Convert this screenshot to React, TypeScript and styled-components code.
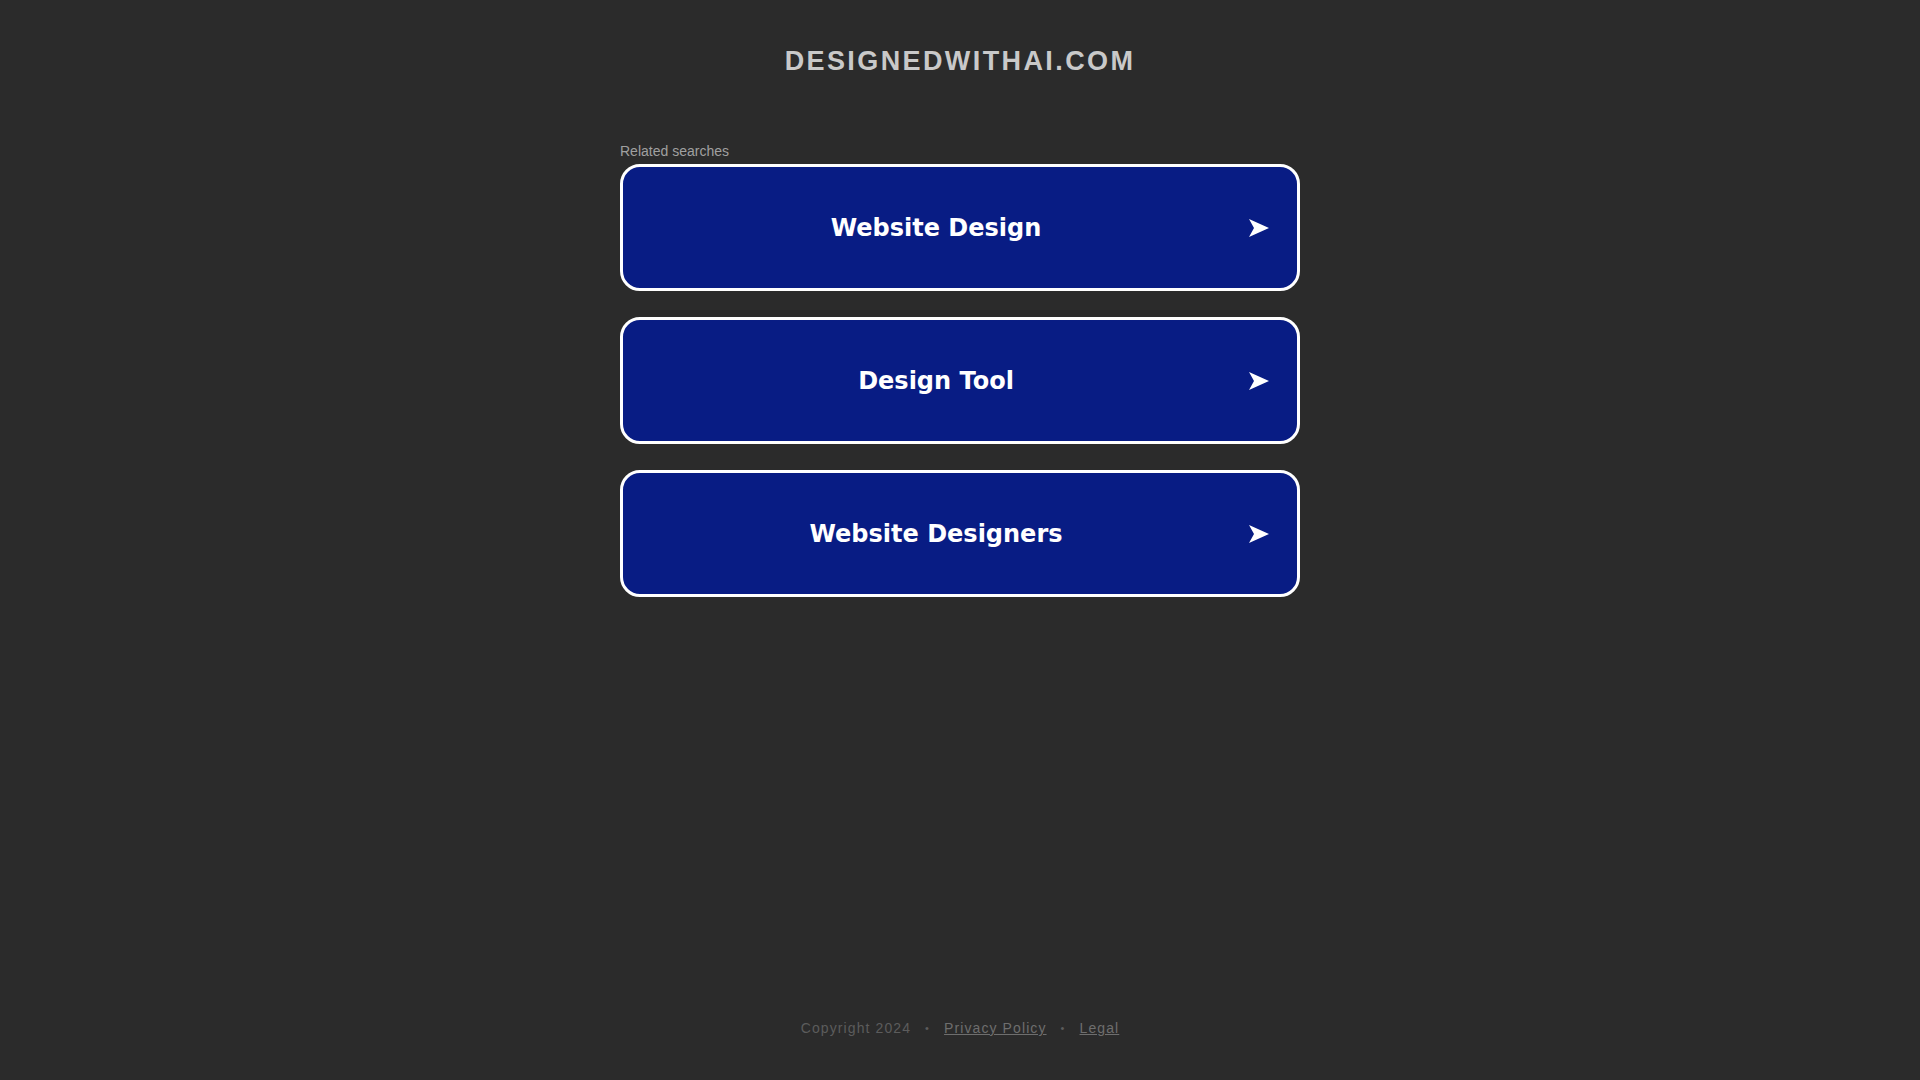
import styled, { createGlobalStyle } from 'styled-components';

const GlobalStyle = createGlobalStyle`
  html, body {
    margin: 0;
    padding: 0;
    background-color: #2b2b2b;
  }
`;

const searches = ['Website Design', 'Design Tool', 'Website Designers'];

const Arrow: React.FC = () => (
  <svg width='20' height='18' viewBox='0 0 20 18'>
    <polygon points='0,0 20,9 0,18 5,9' fill='#fff' />
  </svg>
);

const App: React.FC = () => {
  return (
    <Page>
      <GlobalStyle />
      <Title>designedwithai.com</Title>
      <Main>
        <Caption>Related searches</Caption>
        <List>
          {searches.map((s) => (
            <SearchButton key={s} href='#'>
              <Label>{s}</Label>
              <ArrowBox>
                <Arrow />
              </ArrowBox>
            </SearchButton>
          ))}
        </List>
      </Main>
      <Footer>
        <span>Copyright 2024</span>
        <Dot>•</Dot>
        <FooterLink href='#'>Privacy Policy</FooterLink>
        <Dot>•</Dot>
        <FooterLink href='#'>Legal</FooterLink>
      </Footer>
    </Page>
  );
};

const Page = styled.div`
  min-height: 100vh;
  display: flex;
  flex-direction: column;
  align-items: center;
  font-family: 'Liberation Sans', Arial, sans-serif;
`;

const Title = styled.h1`
  margin: 44px 0 0;
  font-size: 27px;
  line-height: 34px;
  font-weight: 700;
  letter-spacing: 2.4px;
  text-transform: uppercase;
  color: #c9c9c9;
`;

const Main = styled.main`
  width: 680px;
  margin-top: 65px;
`;

const Caption = styled.div`
  font-size: 14px;
  line-height: 16px;
  color: #a0a0a0;
  margin-bottom: 5px;
`;

const List = styled.div`
  display: flex;
  flex-direction: column;
  gap: 26px;
`;

const SearchButton = styled.a`
  box-sizing: border-box;
  height: 127px;
  display: flex;
  align-items: center;
  padding-right: 28px;
  background-color: #081c84;
  border: 3px solid #fff;
  border-radius: 20px;
  text-decoration: none;
  color: #fff;
`;

const Label = styled.span`
  flex: 1;
  text-align: center;
  font-family: 'DejaVu Sans', Verdana, sans-serif;
  font-weight: 700;
  font-size: 24px;
`;

const ArrowBox = styled.span`
  display: flex;
  align-items: center;
  width: 20px;
`;

const Footer = styled.footer`
  margin-top: auto;
  padding-bottom: 43px;
  display: flex;
  align-items: center;
  gap: 14px;
  font-size: 14px;
  line-height: 17px;
  letter-spacing: 1.1px;
  color: #5c5c5c;
`;

const Dot = styled.span`
  font-size: 11px;
`;

const FooterLink = styled.a`
  color: #6e6e6e;
  text-decoration: underline;
`;

export default App;
